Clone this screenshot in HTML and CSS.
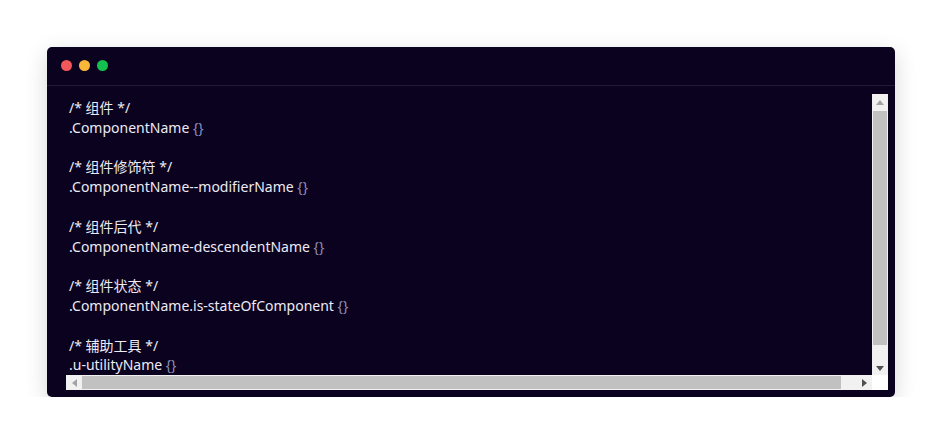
FILE: index.html
```html
<!DOCTYPE html>
<html lang="zh">
<head>
<meta charset="utf-8">
<title>Code window</title>
<link rel="stylesheet" href="styles.css">
</head>
<body>
<div class="page">
  <div class="window">
    <div class="titlebar">
      <span class="dot dot-red"></span>
      <span class="dot dot-yellow"></span>
      <span class="dot dot-green"></span>
    </div>
    <div class="body">
      <div class="scroller">
        <div class="viewport">
          <div class="code">
            <div class="line">/* 组件 */</div>
            <div class="line">.ComponentName <span class="brace">{}</span></div>
            <div class="line"></div>
            <div class="line">/* 组件修饰符 */</div>
            <div class="line">.ComponentName--modifierName <span class="brace">{}</span></div>
            <div class="line"></div>
            <div class="line">/* 组件后代 */</div>
            <div class="line">.ComponentName-descendentName <span class="brace">{}</span></div>
            <div class="line"></div>
            <div class="line">/* 组件状态 */</div>
            <div class="line">.ComponentName.is-stateOfComponent <span class="brace">{}</span></div>
            <div class="line"></div>
            <div class="line">/* 辅助工具 */</div>
            <div class="line">.u-utilityName <span class="brace">{}</span></div>
          </div>
        </div>
        <div class="vbar">
          <div class="btn">
            <svg width="8" height="5" viewBox="0 0 8 5"><polygon points="4,0 8,5 0,5" fill="#a3a3a3"/></svg>
          </div>
          <div class="vtrack"><div class="vthumb"></div></div>
          <div class="btn">
            <svg width="8" height="5" viewBox="0 0 8 5"><polygon points="0,0 8,0 4,5" fill="#505050"/></svg>
          </div>
        </div>
        <div class="hbar">
          <div class="btn hbtn">
            <svg width="5" height="8" viewBox="0 0 5 8"><polygon points="5,0 5,8 0,4" fill="#a3a3a3"/></svg>
          </div>
          <div class="htrack"><div class="hthumb"></div></div>
          <div class="btn hbtn">
            <svg width="5" height="8" viewBox="0 0 5 8"><polygon points="0,0 5,4 0,8" fill="#505050"/></svg>
          </div>
        </div>
        <div class="corner"></div>
      </div>
    </div>
  </div>
</div>
</body>
</html>
```

FILE: styles.css
```css
html, body {
  margin: 0;
  padding: 0;
  background: #ffffff;
}

.page {
  padding: 47px 47px 0 47px;
}

.window {
  width: 848px;
  height: 350px;
  background: #0b0220;
  border-radius: 5px;
  box-shadow: 0 6px 22px rgba(0, 0, 0, 0.16);
  overflow: hidden;
}

.titlebar {
  height: 39px;
  box-sizing: border-box;
  border-bottom: 1px solid #221a3a;
  display: flex;
  align-items: center;
  gap: 7px;
  padding-left: 14px;
  padding-bottom: 1px;
}

.dot {
  width: 11px;
  height: 11px;
  border-radius: 50%;
  display: block;
}
.dot-red { background: #f2575a; }
.dot-yellow { background: #f9b73a; }
.dot-green { background: #14c04e; }

.body {
  padding: 8px 7px 7px 19px;
}

.scroller {
  width: 822px;
  height: 296px;
  display: grid;
  grid-template-columns: 806px 16px;
  grid-template-rows: 281px 15px;
}

.viewport {
  overflow: hidden;
}

.code {
  padding: 4px 0 0 3px;
  font-family: "Noto Sans", "Noto Sans CJK SC", sans-serif;
  font-size: 14px;
  color: #ecebf3;
}

.line {
  height: 19.8px;
  line-height: 19.8px;
  white-space: nowrap;
}

.brace {
  color: #8b8fb8;
}

.vbar {
  background: #f1f1f1;
  display: flex;
  flex-direction: column;
}

.btn {
  flex: 0 0 16px;
  height: 16px;
  display: flex;
  align-items: center;
  justify-content: center;
}

.vbar .btn:last-child {
  flex-basis: 14px;
  height: 14px;
}

.vtrack {
  flex: 1;
  padding: 1px 1px 0 1px;
  display: flex;
  flex-direction: column;
}

.vthumb {
  height: 234px;
  background: #c1c1c1;
}

.hbar {
  background: #f1f1f1;
  display: flex;
}

.hbtn {
  height: 15px;
  width: 16px;
}

.htrack {
  flex: 1;
  padding: 1px 0;
  display: flex;
}

.hthumb {
  width: 759px;
  background: #c1c1c1;
}

.corner {
  background: #ffffff;
}
```
